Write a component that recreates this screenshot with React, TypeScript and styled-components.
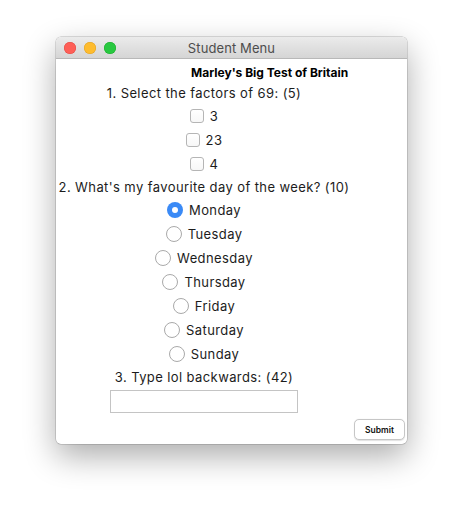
import React from "react";
import styled, { createGlobalStyle } from "styled-components";

const Global = createGlobalStyle`
  html, body { margin: 0; padding: 0; background: #ffffff; }
  body { font-family: Inter, "Liberation Sans", sans-serif; }
  * { box-sizing: border-box; }
`;

const Page = styled.div`
  width: 463px;
  height: 518px;
  padding: 37px 0 0 56px;
`;

const Window = styled.div`
  width: 351px;
  height: 407px;
  border-radius: 5px;
  background: #ffffff;
  box-shadow: 0 0 0 0.5px rgba(0, 0, 0, 0.25), 0 12px 32px rgba(0, 0, 0, 0.33);
  display: flex;
  flex-direction: column;
  overflow: hidden;
`;

const TitleBar = styled.div`
  height: 22px;
  flex: none;
  position: relative;
  display: flex;
  align-items: center;
  justify-content: center;
  background: linear-gradient(#ebebeb, #d5d5d5);
  border-bottom: 1px solid #b8b8b8;
`;

const Lights = styled.div`
  position: absolute;
  left: 8px;
  top: 5px;
  display: flex;
  gap: 8px;
`;

const Light = styled.span<{ $c: string; $b: string }>`
  width: 12px;
  height: 12px;
  border-radius: 50%;
  background: ${(p) => p.$c};
  box-shadow: inset 0 0 0 0.5px ${(p) => p.$b};
`;

const WindowTitle = styled.span`
  font-size: 13px;
  color: #4d4d4d;
  letter-spacing: 0.1px;
`;

const Content = styled.div`
  flex: 1;
  display: flex;
  flex-direction: column;
  padding-top: 4px;
  color: #1a1a1a;
`;

const Header = styled.div`
  height: 19px;
  padding-left: 135px;
  display: flex;
  align-items: center;
  font-size: 12px;
  font-weight: 700;
  color: #000;
`;

const Column = styled.div`
  width: 296px;
  display: flex;
  flex-direction: column;
  align-items: center;
`;

const Question = styled.div`
  height: 22px;
  display: flex;
  align-items: center;
  font-size: 13px;
  letter-spacing: 0.4px;
  color: #1c1c1c;
`;

const OptionRow = styled.label`
  height: 24px;
  display: flex;
  align-items: center;
  gap: 6px;
  font-size: 13px;
  letter-spacing: 0.4px;
  color: #1c1c1c;
`;

const Box = styled.span`
  width: 14px;
  height: 14px;
  border-radius: 3px;
  border: 1px solid #b5b5b5;
  background: linear-gradient(#ffffff, #f7f7f7);
`;

const Radio = styled.span<{ $on?: boolean }>`
  width: 16px;
  height: 16px;
  border-radius: 50%;
  display: flex;
  align-items: center;
  justify-content: center;
  border: ${(p) => (p.$on ? "none" : "1px solid #a9a9a9")};
  background: ${(p) => (p.$on ? "#3a8af6" : "#ffffff")};
  &::after {
    content: "";
    display: ${(p) => (p.$on ? "block" : "none")};
    width: 6px;
    height: 6px;
    border-radius: 50%;
    background: #ffffff;
  }
`;

const Field = styled.div`
  margin-top: 2px;
  width: 188px;
  height: 23px;
  border: 1px solid #c4c4c4;
  background: #ffffff;
`;

const Footer = styled.div`
  display: flex;
  justify-content: flex-end;
  padding: 6px 2px 0 0;
`;

const Button = styled.button`
  width: 51px;
  height: 21px;
  border-radius: 5px;
  border: 1px solid #c6c6c6;
  background: #ffffff;
  box-shadow: 0 0.5px 1px rgba(0, 0, 0, 0.12);
  font-family: Inter, "Liberation Sans", sans-serif;
  font-size: 8.5px;
  font-weight: 600;
  color: #111;
  padding: 0;
`;

const days = ["Monday", "Tuesday", "Wednesday", "Thursday", "Friday", "Saturday", "Sunday"];

export default function App() {
  return (
    <Page>
      <Global />
      <Window>
        <TitleBar>
          <Lights>
            <Light $c="#fe5f57" $b="#e14942" />
            <Light $c="#febc2e" $b="#dfa023" />
            <Light $c="#28c840" $b="#1aab29" />
          </Lights>
          <WindowTitle>Student Menu</WindowTitle>
        </TitleBar>
        <Content>
          <Header>Marley's Big Test of Britain</Header>
          <Column>
            <Question>1. Select the factors of 69: (5)</Question>
            {["3", "23", "4"].map((v) => (
              <OptionRow key={v}>
                <Box />
                {v}
              </OptionRow>
            ))}
            <Question>2. What's my favourite day of the week? (10)</Question>
            {days.map((d, i) => (
              <OptionRow key={d}>
                <Radio $on={i === 0} />
                {d}
              </OptionRow>
            ))}
            <Question>3. Type lol backwards: (42)</Question>
            <Field />
          </Column>
          <Footer>
            <Button>Submit</Button>
          </Footer>
        </Content>
      </Window>
    </Page>
  );
}
